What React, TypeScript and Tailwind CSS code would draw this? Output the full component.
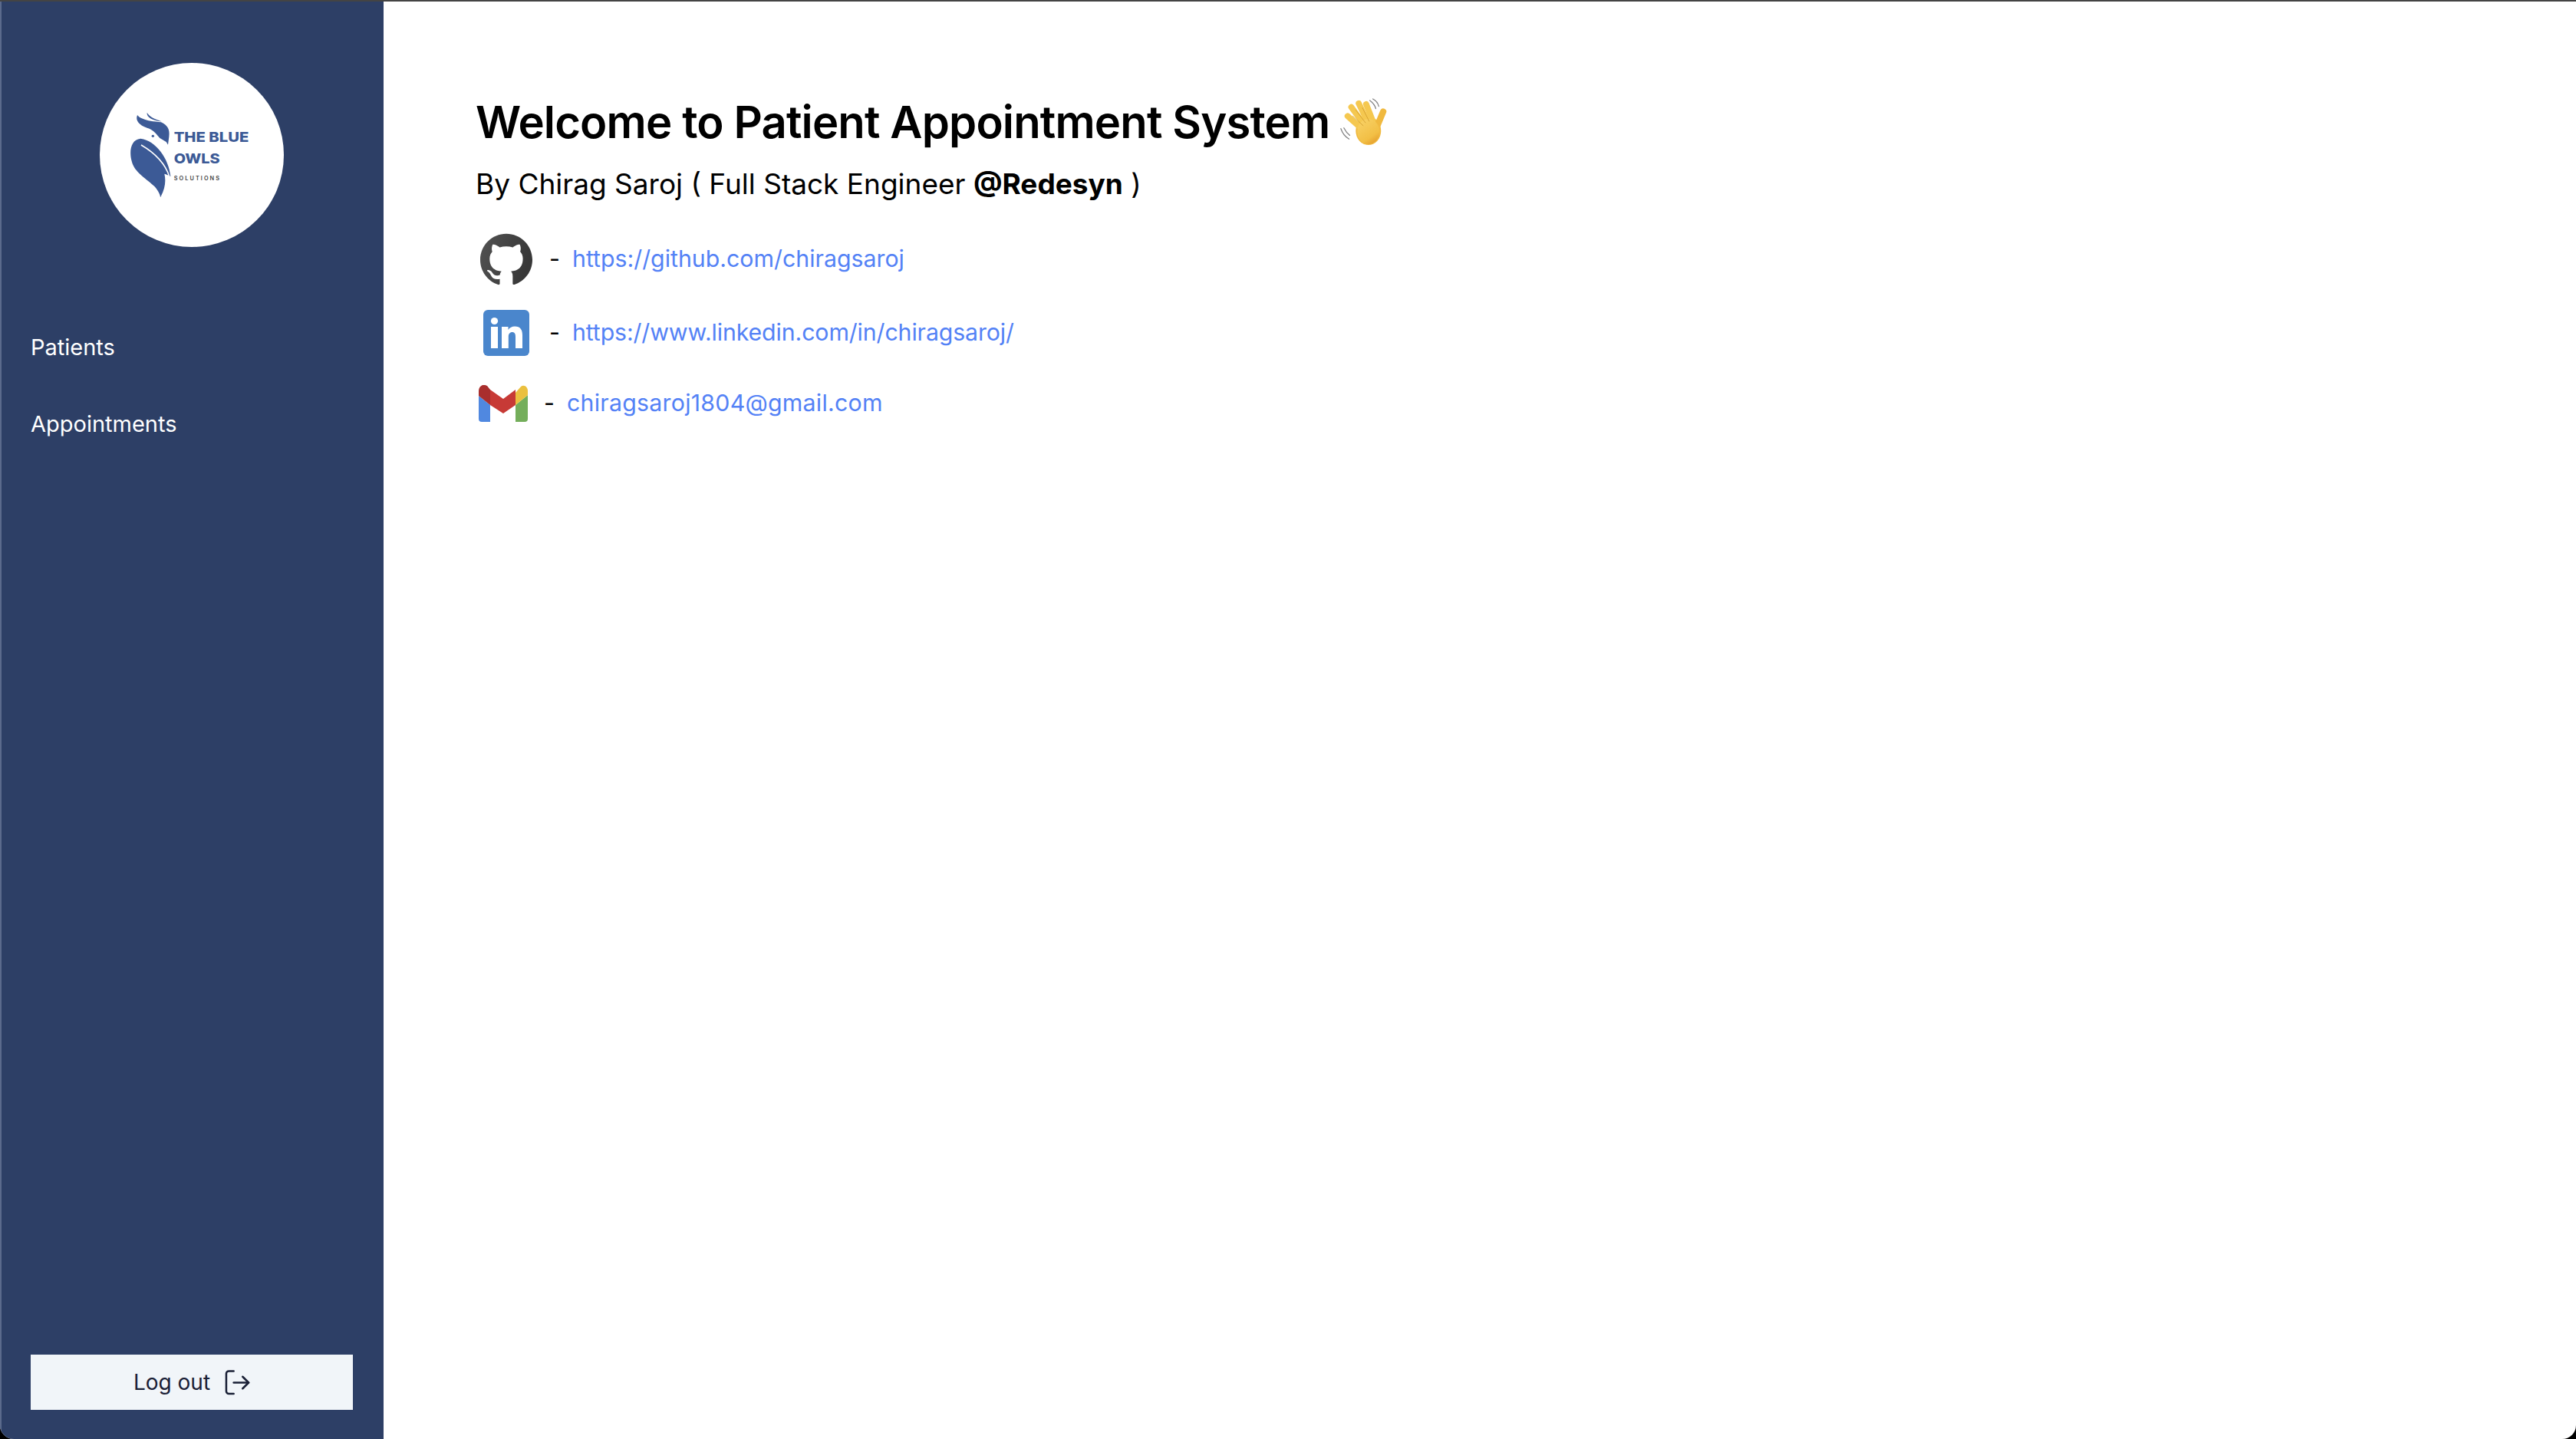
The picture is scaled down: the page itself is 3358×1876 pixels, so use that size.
import { useId } from "react";

function OwlLogo() {
  return (
    <svg viewBox="30 36 720 720" className="w-full h-full">
      <path
        fill="#3c5a96"
        d="M177 240C168 262 185 280 215 290C235 296 245 305 265 330L290 345L297 356L301 325C305 295 295 280 270 268C240 265 215 262 200 255C190 252 182 247 177 240Z"
      />
      <path fill="#3c5a96" d="M215 230C212 250 240 262 272 265C255 258 225 250 215 230Z" />
      <path fill="#fff" d="M222 310L252 322L246 333C236 331 228 321 222 310Z" />
      <circle cx="238" cy="322" r="5" fill="#3c5a96" />
      <path
        fill="#3c5a96"
        d="M190 332C150 335 145 385 155 420C165 465 215 490 245 520C262 540 267 555 267 562C285 530 290 500 283 470C300 475 305 480 307 480C300 410 250 340 190 332Z"
      />
      <path fill="none" stroke="#fff" strokeWidth="5" d="M192 357C240 385 285 425 303 482" />
      <g fontFamily="Inter, sans-serif" fontWeight="800" fill="#3c5a96" fontSize="52">
        <text x="320" y="346" textLength="293" lengthAdjust="spacingAndGlyphs">
          THE BLUE
        </text>
        <text x="320" y="428" textLength="180" lengthAdjust="spacingAndGlyphs">
          OWLS
        </text>
      </g>
      <text
        x="320"
        y="495"
        textLength="178"
        fontFamily="Inter, sans-serif"
        fontWeight="600"
        fontSize="22"
        fill="#444"
      >
        SOLUTIONS
      </text>
    </svg>
  );
}

function GithubIcon() {
  const id = useId();
  return (
    <svg viewBox="0 0 24 24" className="w-[68px] h-[68px]">
      <defs>
        <linearGradient id={id} x1="0" y1="0" x2="1" y2="0.3">
          <stop offset="0" stopColor="#525252" />
          <stop offset="1" stopColor="#383838" />
        </linearGradient>
      </defs>
      <path
        fill={`url(#${id})`}
        d="M12 .297c-6.63 0-12 5.373-12 12 0 5.303 3.438 9.8 8.205 11.385.6.113.82-.258.82-.577 0-.285-.01-1.04-.015-2.04-3.338.724-4.042-1.61-4.042-1.61C4.422 18.07 3.633 17.7 3.633 17.7c-1.087-.744.084-.729.084-.729 1.205.084 1.838 1.236 1.838 1.236 1.07 1.835 2.809 1.305 3.495.998.108-.776.417-1.305.76-1.605-2.665-.3-5.466-1.332-5.466-5.93 0-1.31.465-2.38 1.235-3.22-.135-.303-.54-1.523.105-3.176 0 0 1.005-.322 3.3 1.23.96-.267 1.98-.399 3-.405 1.02.006 2.04.138 3 .405 2.28-1.552 3.285-1.23 3.285-1.23.645 1.653.24 2.873.12 3.176.765.84 1.23 1.91 1.23 3.22 0 4.61-2.805 5.625-5.475 5.92.42.36.81 1.096.81 2.22 0 1.606-.015 2.896-.015 3.286 0 .315.21.69.825.57C20.565 22.092 24 17.592 24 12.297c0-6.627-5.373-12-12-12"
      />
    </svg>
  );
}

function LinkedinIcon() {
  return (
    <svg viewBox="0 0 60 60" className="w-[60px] h-[60px]">
      <rect width="60" height="60" rx="6" fill="#4a86cc" />
      <circle cx="14.500" cy="14.500" r="4.600" fill="#fff" />
      <rect x="10" y="22" width="9" height="28" fill="#fff" />
      <path
        fill="#fff"
        d="M24 22h8.500v4c1.800-3 5-4.600 8.500-4.600 7.500 0 10 4.600 10 11.600v17h-9V35c0-3.600-1-6-4.200-6-3.300 0-5 2.400-5 6v15H24Z"
      />
    </svg>
  );
}

function GmailIcon() {
  return (
    <svg viewBox="0 0 64 48" className="w-[64px] h-[48px]">
      <path fill="#5088e0" d="M0 14V44a4 4 0 0 0 4 4H15V26Z" />
      <path fill="#74ae5b" d="M48 26V48H60a4 4 0 0 0 4-4V13Z" />
      <path fill="#ebc03f" d="M48 10 L55 2C59-1 64 2 64 8V13L48 26Z" />
      <path fill="#c73a36" d="M15 6 L32 18 L48 6V26L32 37 L15 26Z" />
      <path fill="#a92e2d" d="M0 8C0 1 6-2 11 1L15 6V26L0 14Z" />
    </svg>
  );
}

function WaveEmoji() {
  const id = useId();
  return (
    <svg viewBox="0 0 64 64" className="w-[62px] h-[62px] shrink-0">
      <defs>
        <linearGradient id={id} x1="0.2" y1="0" x2="0.8" y2="1">
          <stop offset="0" stopColor="#f8d165" />
          <stop offset="0.7" stopColor="#f2bf45" />
          <stop offset="1" stopColor="#e39a2a" />
        </linearGradient>
      </defs>
      <ellipse cx="39" cy="44" rx="17" ry="19" fill="#f0b93f" />
      <g fill="none" stroke="#f5c850" strokeWidth="8" strokeLinecap="round">
        <path d="M11 24L31 42" />
        <path d="M16 12L33 35" />
        <path d="M26 7L38 32" />
        <path d="M36 8L45 31" />
      </g>
      <path stroke="#f0b93f" strokeWidth="8.500" strokeLinecap="round" d="M49 42L59 18" />
      <ellipse cx="39" cy="45" rx="15" ry="17" fill={`url(#${id})`} />
      <g fill="none" stroke="#cf9a2c" strokeWidth="0.800" strokeLinecap="round">
        <path d="M18 24L32 37" />
        <path d="M22 16L35 33" />
        <path d="M31 13L40 31" />
      </g>
      <g fill="none" stroke="#808080" strokeWidth="1.300" strokeLinecap="round">
        <path d="M41 3C45 6 48 10 49 14" />
        <path d="M45 1C49 3 52 7 53 11" />
        <path d="M2 41C4 47 8 52 13 55" />
        <path d="M6 40C8 44 10 47 14 50" />
      </g>
    </svg>
  );
}

function LogoutIcon() {
  return (
    <svg viewBox="0 0 34 34" fill="none" stroke="#1a2036" strokeWidth="2.600" strokeLinecap="round" strokeLinejoin="round" className="w-[33px] h-[33px]">
      <path d="M12 1.500H5.500A3.500 3.500 0 0 0 2 5V28.500A3.500 3.500 0 0 0 5.500 32H12" />
      <path d="M12 17H32" />
      <path d="M24 9L32 17L24 25" />
    </svg>
  );
}

export default function App() {
  return (
    <div className="h-screen w-full bg-black overflow-hidden font-['Inter',sans-serif]">
      <div className="flex h-full w-full bg-white rounded-b-[18px] overflow-hidden border-t-2 border-t-[#444]">
        <aside className="flex flex-col w-[500px] shrink-0 bg-[#2d3f66] border-l-2 border-l-[#5b6a8c] pl-[38px] pr-[40px] pt-[80px] pb-[38px]">
          <div className="w-[240px] h-[240px] rounded-full bg-white mx-auto overflow-hidden">
            <OwlLogo />
          </div>
          <nav className="flex flex-col mt-[113px] text-[29px] leading-[36px] text-white gap-[64px]">
            <a>Patients</a>
            <a>Appointments</a>
          </nav>
          <button className="mt-auto h-[72px] flex items-center justify-center gap-[19px] bg-[#f1f5f9] text-[#1a2036] text-[28px]">
            Log out
            <LogoutIcon />
          </button>
        </aside>
        <main className="flex-1 pl-[120px] pt-[121px] text-black">
          <h1 className="flex items-center gap-[13px] text-[58px] leading-[72px] font-semibold tracking-[-0.85px]">
            Welcome to Patient Appointment System
            <WaveEmoji />
          </h1>
          <p className="mt-[15px] text-[37px] leading-[60px]">
            By Chirag Saroj ( Full Stack Engineer <strong className="font-bold">@Redesyn</strong> )
          </p>
          <div className="mt-[32px] flex flex-col text-[30.300px] text-[#5482f6]">
            <div className="flex items-center h-[72px]">
              <span className="w-[74px] pl-[6px]">
                <GithubIcon />
              </span>
              <span className="text-black w-[52px] pl-[22px]">-</span>
              <a>https://github.com/chiragsaroj</a>
            </div>
            <div className="flex items-center h-[72px] mt-[24px]">
              <span className="w-[74px] pl-[10px]">
                <LinkedinIcon />
              </span>
              <span className="text-black w-[52px] pl-[22px]">-</span>
              <a className="tracking-[-0.12px]">https://www.linkedin.com/in/chiragsaroj/</a>
            </div>
            <div className="flex items-center h-[72px] mt-[20px]">
              <span className="w-[74px] pl-[4px]">
                <GmailIcon />
              </span>
              <span className="text-black w-[45px] pl-[15px]">-</span>
              <a className="tracking-[0.25px]">chiragsaroj1804@gmail.com</a>
            </div>
          </div>
        </main>
      </div>
    </div>
  );
}
